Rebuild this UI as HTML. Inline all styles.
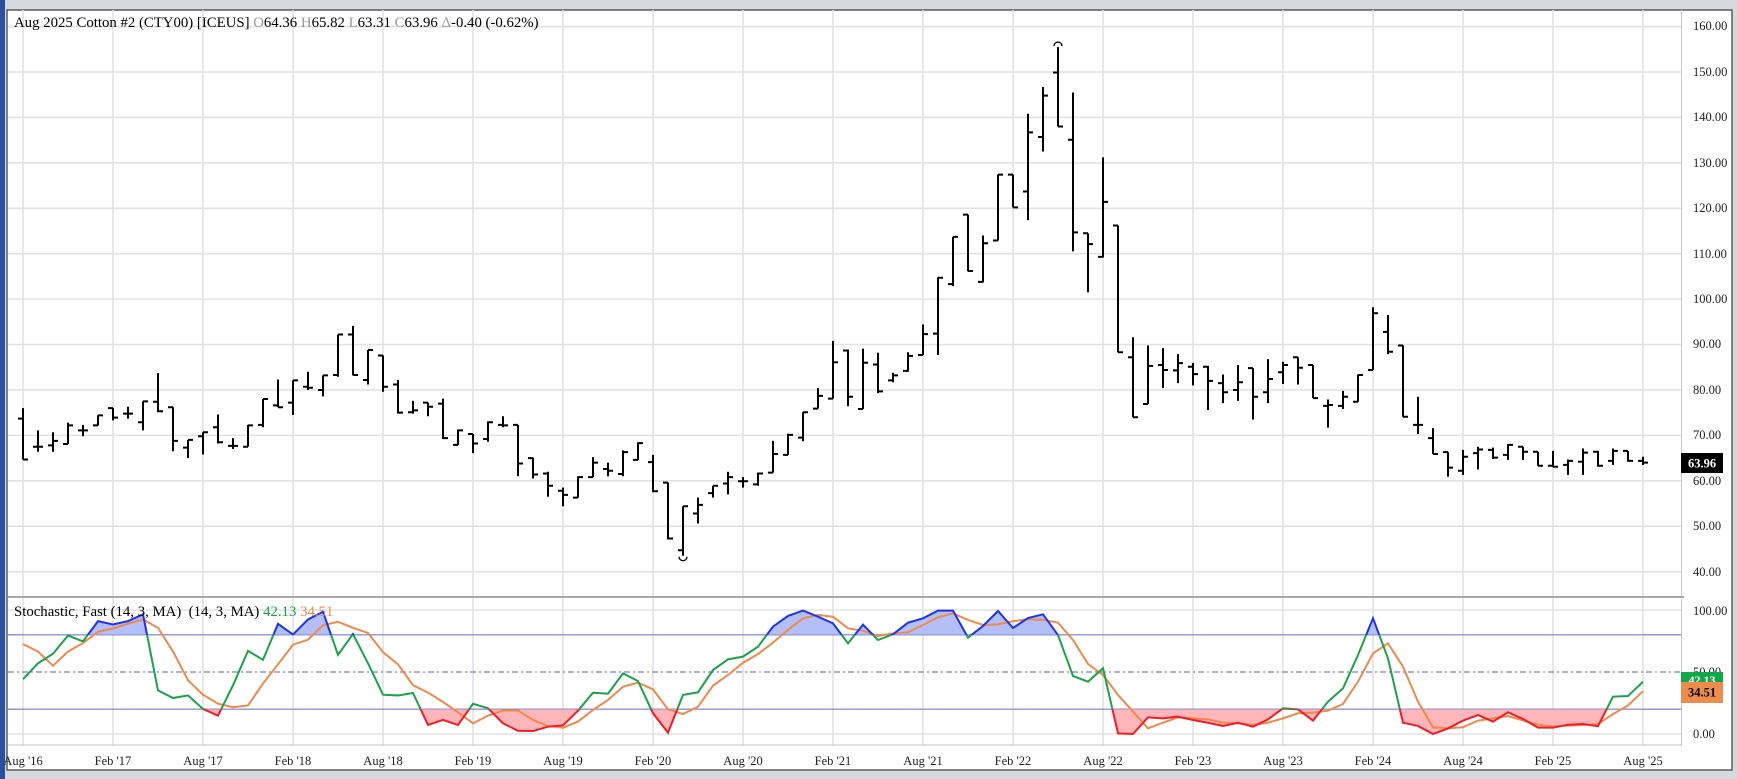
<!DOCTYPE html>
<html><head><meta charset="utf-8">
<style>
html,body{margin:0;padding:0;background:#d6dade;}
svg{display:block;font-family:"Liberation Serif",serif;}
</style></head>
<body>
<svg id="s" width="1737" height="779" xmlns="http://www.w3.org/2000/svg">
<rect x="0" y="0" width="1737" height="779" fill="#d6dade"/>
<rect x="0" y="0" width="5" height="779" fill="#2e4f9c"/>
<rect x="7" y="10" width="1725" height="760" fill="#ffffff" stroke="#5a5a5a" stroke-width="1.5"/>
<g id="grid"></g>
<g id="bars"></g>
<g id="stoch"></g>
<text x="14" y="27" font-size="14.8" fill="#000">Aug 2025 Cotton #2 (CTY00) [ICEUS] <tspan fill="#999">O</tspan>64.36 <tspan fill="#999">H</tspan>65.82 <tspan fill="#999">L</tspan>63.31 <tspan fill="#999">C</tspan>63.96 <tspan fill="#999">Δ</tspan>-0.40 (-0.62%)</text>
<text x="14" y="616" font-size="14.8" fill="#000">Stochastic, Fast (14, 3, MA)&#160;&#160;(14, 3, MA) <tspan fill="#1aa34a">42.13</tspan> <tspan fill="#f08a4b">34.51</tspan></text>
<g font-size="12.5" fill="#222">
<text x="1693" y="30">160.00</text><text x="1693" y="76">150.00</text><text x="1693" y="121">140.00</text><text x="1693" y="167">130.00</text><text x="1693" y="212">120.00</text><text x="1693" y="258">110.00</text><text x="1693" y="303">100.00</text><text x="1693" y="348">90.00</text><text x="1693" y="394">80.00</text><text x="1693" y="439">70.00</text><text x="1693" y="485">60.00</text><text x="1693" y="530">50.00</text><text x="1693" y="576">40.00</text>
<text x="1693" y="615">100.00</text><text x="1693" y="676">50.00</text><text x="1693" y="738">0.00</text>
</g>
<rect x="1681" y="453" width="42" height="20" fill="#000"/>
<text x="1702" y="467.5" font-size="12.5" font-weight="bold" fill="#fff" text-anchor="middle">63.96</text>
<rect x="1681" y="672" width="42" height="12" fill="#12a84a"/>
<text x="1702" y="684" font-size="12" font-weight="bold" fill="#fff" text-anchor="middle">42.13</text>
<rect x="1681" y="682" width="42" height="21" fill="#ee8c4e"/>
<text x="1702" y="696.5" font-size="12.5" font-weight="bold" fill="#000" text-anchor="middle">34.51</text>
<g id="xl" font-size="12.5" fill="#222" text-anchor="middle"></g>
</svg>
<script>
var NS="http://www.w3.org/2000/svg";
function el(p,t,a){var e=document.createElementNS(NS,t);for(var k in a)e.setAttribute(k,a[k]);p.appendChild(e);return e;}
function X(i){return 23+15*i;}
function PY(p){return 26.6+(160-p)*4.542;}
function SY(v){return 734-v*1.24;}
var g=document.getElementById('grid');
for(var p=40;p<=160;p+=10)el(g,'line',{x1:8,x2:1681,y1:PY(p),y2:PY(p),stroke:'#e2e2e2','stroke-width':1.6});
for(var k=0;k<=18;k++){var x=X(k*6);el(g,'line',{x1:x,x2:x,y1:10,y2:746,stroke:'#e2e2e2','stroke-width':1.6});}
el(g,'line',{x1:8,x2:1681,y1:610,y2:610,stroke:'#e2e2e2','stroke-width':1.6});
el(g,'line',{x1:8,x2:1681,y1:734,y2:734,stroke:'#e2e2e2','stroke-width':1.6});
el(g,'line',{x1:8,x2:1681,y1:745,y2:745,stroke:'#d0d0d0','stroke-width':1.2});
el(g,'line',{x1:8,x2:1684,y1:597,y2:597,stroke:'#a8a8a8','stroke-width':2});
el(g,'line',{x1:1681.5,x2:1681.5,y1:10,y2:596,stroke:'#c8c8c8','stroke-width':1});
el(g,'line',{x1:1681.5,x2:1681.5,y1:599,y2:746,stroke:'#c8c8c8','stroke-width':1});
el(g,'line',{x1:8,x2:1681,y1:SY(80),y2:SY(80),stroke:'#6b72c4','stroke-width':1.2});
el(g,'line',{x1:8,x2:1681,y1:SY(20),y2:SY(20),stroke:'#6b72c4','stroke-width':1.2});
el(g,'line',{x1:8,x2:1681,y1:SY(50),y2:SY(50),stroke:'#8d93d6','stroke-width':1.4,'stroke-dasharray':'6,3,2,3'});
var xl=document.getElementById('xl');
var yrs=['16','17','17','18','18','19','19','20','20','21','21','22','22','23','23','24','24','25','25'];
for(var k=0;k<=18;k++){var t=el(xl,'text',{x:X(k*6),y:765});t.textContent=(k%2==0?'Aug':'Feb')+" '"+yrs[k];}
var B=[[76,64.7,73.7,64.7],[71.1,66.4,67.5,67.5],[70.7,66.4,67.8,68.8],[72.8,68.1,68.1,72.2],[72.3,69.8,71.1,71.1],[74.4,72.2,72.2,74.4],[76,73.3,76,73.9],[76.3,73.7,74.8,74.8],[77.5,71.1,72.9,77.5],[83.7,75.1,77.4,75.3],
[76.2,66.5,76.2,68.8],[69,65,67.3,69],[70.7,65.8,69.8,70.7],[74.6,68.2,71.8,68.5],[69.4,67,67.7,67.7],[72.3,67.5,67.5,72.2],[78,71.8,72.3,78],[82.3,76.2,76.6,76.2],[82.1,74.5,77.2,82.1],[84,80,80.7,80.5],
[83.2,78.6,80,83.2],[92.2,82.9,83.3,92.2],[94.1,83.2,92.2,83.3],[88.8,81.2,82.2,88.8],[87.6,79.6,87.6,80.7],[82.2,74.8,81.2,75],[77.6,74.8,75.1,75.5],[77.2,74.2,77.2,76.3],[78.1,69.2,77,69.4],[71.3,67.9,67.9,71.1],
[70.3,66.1,70.3,68.2],[73.1,68.6,69.2,72.9],[74.2,71.8,72.3,72.2],[72.3,61,72.3,63.8],[65.1,60.5,65,61.4],[62,56.5,61.6,58.9],[58.5,54.4,57.8,56.9],[61,56.3,56.3,60.8],[65.2,60.8,60.8,64],[64,61,62.6,62.2],
[66.7,61,61.5,66.3],[68.5,64.6,64.6,68.3],[65.7,57.5,64.1,57.7],[59.6,47.1,59.6,47.3],[54.4,43.5,44.7,54.4],[56.3,50.6,52.8,54.7],[58.9,56.3,57.3,58.9],[62,57,59.4,60.8],[60.8,58.5,59.9,59.9],[61.8,58.9,59.2,61.6],
[68.8,61.8,61.8,65.9],[70.4,65.7,65.7,70.1],[75.1,68.7,69.5,75.1],[80.4,75.9,75.9,78.7],[90.8,78.1,78.1,86.1],[88.9,76.4,88.7,78.5],[89.1,75.8,75.8,86],[88.2,79.3,85.6,79.7],[83.8,81.7,82.1,83.2],[88.3,84,84.2,87.5],
[94.4,87.7,87.7,92.3],[104.8,87.7,92.4,104.7],[113.7,102.9,103.3,113.7],[118.6,106.1,118.6,106.2],[114,103.7,103.8,112.3],[127.4,112.9,112.9,127.4],[127.4,120.2,127.4,120.2],[140.8,117.4,123.7,136.7],[146.7,132.5,135.7,144.8],[155.5,138,149.9,138],
[145.5,110.5,135.1,114.7],[114.5,101.5,114.5,112.1],[131.2,109.2,109.3,121.4],[116.2,88.3,116.2,88.3],[91.6,74,87.2,74],[89.8,76.9,76.9,85.3],[89.2,80.4,85.5,84.4],[87.9,81.5,84.3,85.9],[85.9,81,85.1,83.5],[85.3,75.6,85.1,82],
[83.4,77.1,81.5,79.5],[85.5,77.6,80,81.7],[84.8,73.5,84.8,78.5],[86.8,77.1,79.5,82.4],[86.2,81.3,83.9,85.5],[87.2,81.2,87.2,84.9],[85.5,78.2,85.5,78.2],[77.9,71.7,76.5,76.7],[79.8,75.8,76.5,78.5],[83.4,77.4,77.4,83.3],
[98.2,84.4,84.4,96.9],[96.5,87.9,92.8,88.4],[89.8,74.1,89.8,74.1],[78.5,70.3,72.3,72.3],[71.6,65.9,69.4,65.9],[66.3,60.9,66.3,62.9],[66.8,61.3,62.2,65.3],[67.5,62.5,66.1,66.9],[67.3,64.8,66.8,65.1],[68.1,64.6,65.7,67.9],
[67.5,64.6,67.5,66.4],[66.4,63.3,66.4,63.3],[66.6,63,63.3,63.1],[64.7,61.3,63.5,64.4],[67.1,61.3,64.2,66.2],[66.6,63.1,66.4,63.3],[67.1,63.5,64.4,66.6],[66.6,64.2,66.6,64.4],[65.3,63.5,64.4,64]];
var bg=document.getElementById('bars');
var d='';
B.forEach(function(b,i){var x=X(i);d+='M'+x+' '+PY(b[0])+'V'+PY(b[1])+'M'+(x-5)+' '+PY(b[2])+'H'+x+'M'+x+' '+PY(b[3])+'H'+(x+5);});
el(bg,'path',{d:d,stroke:'#000','stroke-width':2,fill:'none'});
el(bg,'path',{d:'M'+(X(69)-4)+' '+(PY(155.5)-1)+'a4 4 0 0 1 8 0',stroke:'#000','stroke-width':1.3,fill:'none'});
el(bg,'path',{d:'M'+(X(44)-4)+' '+(PY(43.5)+1)+'a4 4 0 0 0 8 0',stroke:'#000','stroke-width':1.3,fill:'none'});
var K=[44.2,57,64.7,79.4,74.7,91,88.3,91,96.5,35.2,29,31.1,20.2,14.8,39.3,67.1,59.8,88.9,80.2,92.4,98.6,63.8,80.6,57,31.7,31.1,33.1,7.3,11.3,7.3,24.4,20.8,8.6,2.6,2.4,5.9,7,18.8,33.3,32.5,48.9,42.7,16.7,1.1,31.5,33.6,51.6,60.2,62.4,70.4,86.6,95.2,99.5,94.6,89.2,73.1,88.2,75.8,80.4,89.8,93.3,99.5,99.5,77.7,87.1,99.2,85.5,93.5,96.5,79.8,46.8,42.2,53,0.5,0,13.4,12.6,14,11.3,9.1,6.5,9.1,5.9,11.8,20.7,19.9,10.8,26.1,36.8,63.7,93.3,61,9.1,6.5,0,4.5,10.8,15.3,10,17.5,12.1,5.1,5.1,7.5,8.1,6.3,30.1,30.6,42.13];
var D=[72.6,66.5,55.1,66.5,73.4,82.3,85.1,88.9,92.4,85.6,66.5,43.4,31.7,24.4,21.6,23,40.7,56.2,72,76.1,87.7,90.5,85.6,81.5,66,56.2,39.3,33.4,25.8,17.6,8.6,14.8,19,19,11.3,6.5,5.1,10,19.4,27.5,38.1,41.4,36,19.9,16.1,22,39,47.6,57.5,64.5,73.7,83.9,93.3,96,94.6,85.2,83.3,79,81.2,82,87.9,94.1,97.3,92,87.9,88.4,90.9,92.5,92,89.8,75.8,56.5,47.6,31.5,18.1,4.6,9.1,13.4,12.6,11.8,9.1,8.6,7.3,9.1,12.6,16.7,17.2,18.8,24.2,42.2,65,73.1,54.3,26.1,5.4,4.6,5.4,10.8,12.6,14.5,11,7.5,6.2,6.8,7.3,8.1,16,23,34.51];
var sg=document.getElementById('stoch');
var defs=el(sg,'defs',{});
var c1=el(defs,'clipPath',{id:'ca'});el(c1,'rect',{x:0,y:0,width:1737,height:SY(80)});
var c2=el(defs,'clipPath',{id:'cb'});el(c2,'rect',{x:0,y:SY(20),width:1737,height:200});
var c3=el(defs,'clipPath',{id:'cm'});el(c3,'rect',{x:0,y:SY(80),width:1737,height:SY(20)-SY(80)});
var kp=K.map(function(v,i){return X(i)+','+SY(v);}).join(' ');
var dp=D.map(function(v,i){return X(i)+','+SY(v);}).join(' ');
var x0=X(0),x1=X(K.length-1);
el(sg,'polygon',{points:x0+','+SY(80)+' '+kp+' '+x1+','+SY(80),fill:'#b3bff6','clip-path':'url(#ca)'});
el(sg,'polygon',{points:x0+','+SY(20)+' '+kp+' '+x1+','+SY(20),fill:'#ffb6ba','clip-path':'url(#cb)'});
el(sg,'polyline',{points:dp,fill:'none',stroke:'#f0894a','stroke-width':2});
el(sg,'polyline',{points:kp,fill:'none',stroke:'#1aa34a','stroke-width':2,'clip-path':'url(#cm)'});
el(sg,'polyline',{points:kp,fill:'none',stroke:'#1b33f0','stroke-width':2,'clip-path':'url(#ca)'});
el(sg,'polyline',{points:kp,fill:'none',stroke:'#f51a24','stroke-width':2,'clip-path':'url(#cb)'});
</script>
</body></html>
